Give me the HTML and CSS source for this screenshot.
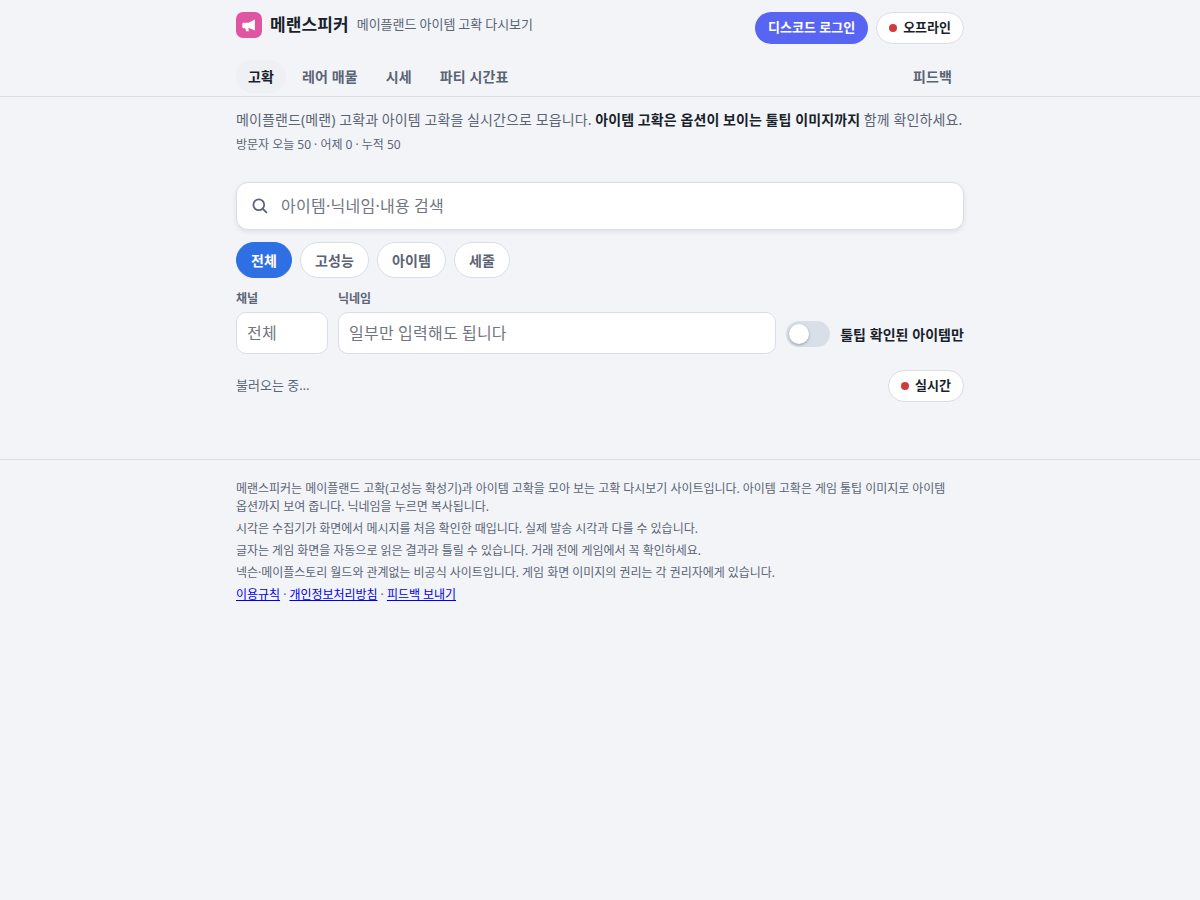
FILE: index.html
```html
<!DOCTYPE html>
<html lang="ko">
<head>
<meta charset="utf-8">
<title>메랜스피커</title>
<link rel="stylesheet" href="styles.css">
</head>
<body>
<header class="header">
  <div class="wrap">
    <div class="topbar">
      <div class="brand">
        <svg class="logo" viewBox="0 0 26 26" aria-hidden="true">
          <rect width="26" height="26" rx="7" fill="#e0559f"/>
          <path d="M18.9 7.4v11.2l-5.4-2.4h-1.3l.7 3.1h-2.7l-1-3.1H7.4a1.1 1.1 0 0 1-1.1-1.1v-3.3a1.1 1.1 0 0 1 1.1-1.1h5.1z" fill="#fff"/>
        </svg>
        <span class="name">메랜스피커</span>
        <span class="tagline">메이플랜드 아이템 고확 다시보기</span>
      </div>
      <div class="actions">
        <button class="login">디스코드 로그인</button>
        <span class="status"><i class="dot"></i>오프라인</span>
      </div>
    </div>
    <nav class="nav">
      <a class="tab active">고확</a>
      <a class="tab">레어 매물</a>
      <a class="tab">시세</a>
      <a class="tab">파티 시간표</a>
      <a class="tab feedback">피드백</a>
    </nav>
  </div>
</header>
<main class="wrap">
  <p class="lead">메이플랜드(메랜) 고확과 아이템 고확을 실시간으로 모읍니다. <strong>아이템 고확은 옵션이 보이는 툴팁 이미지까지</strong> 함께 확인하세요.</p>
  <p class="visits">방문자 오늘 50 · 어제 0 · 누적 50</p>
  <div class="search">
    <svg class="search-icon" viewBox="0 0 18 18" fill="none" stroke="#5b6475" stroke-width="1.8" stroke-linecap="round" aria-hidden="true">
      <circle cx="7.8" cy="7.8" r="5.4"/><path d="M12 12l3.4 3.4"/>
    </svg>
    <input class="search-input" placeholder="아이템·닉네임·내용 검색">
  </div>
  <div class="chips">
    <button class="chip selected">전체</button>
    <button class="chip">고성능</button>
    <button class="chip">아이템</button>
    <button class="chip">세줄</button>
  </div>
  <div class="filters">
    <label class="field channel">채널<input class="input" placeholder="전체"></label>
    <label class="field nickname">닉네임<input class="input" placeholder="일부만 입력해도 됩니다"></label>
    <div class="toggle"><span class="track"><span class="knob"></span></span>툴팁 확인된 아이템만</div>
  </div>
  <div class="feed-head">
    <span>불러오는 중…</span>
    <span class="status"><i class="dot"></i>실시간</span>
  </div>
</main>
<footer class="footer">
  <div class="wrap">
    <p>메랜스피커는 메이플랜드 고확(고성능 확성기)과 아이템 고확을 모아 보는 고확 다시보기 사이트입니다. 아이템 고확은 게임 툴팁 이미지로 아이템 옵션까지 보여 줍니다. 닉네임을 누르면 복사됩니다.</p>
    <p>시각은 수집기가 화면에서 메시지를 처음 확인한 때입니다. 실제 발송 시각과 다를 수 있습니다.</p>
    <p>글자는 게임 화면을 자동으로 읽은 결과라 틀릴 수 있습니다. 거래 전에 게임에서 꼭 확인하세요.</p>
    <p>넥슨·메이플스토리 월드와 관계없는 비공식 사이트입니다. 게임 화면 이미지의 권리는 각 권리자에게 있습니다.</p>
    <p><a href="#">이용규칙</a> · <a href="#">개인정보처리방침</a> · <a href="#">피드백 보내기</a></p>
  </div>
</footer>
</body>
</html>
```
FILE: styles.css
```css
* { box-sizing: border-box; }
body {
  margin: 0;
  background: #f2f4f8;
  color: #1a1f2c;
  font: 14px/1.5 "Noto Sans", "Noto Sans CJK KR", sans-serif;
  word-break: keep-all;
}
p { margin: 0; }
button, input { font-family: inherit; }
.wrap { width: 728px; margin: 0 auto; }

.header { height: 97px; border-bottom: 1px solid #d9dde5; }
.topbar { display: flex; justify-content: space-between; height: 60px; padding-top: 12px; }
.brand { display: flex; align-items: center; gap: 8px; height: 26px; }
.logo { width: 26px; height: 26px; }
.name { font-size: 17px; font-weight: 700; letter-spacing: .1px; }
.tagline { font-size: 13px; color: #5b6475; word-spacing: -.42px; }
.actions { display: flex; gap: 8px; }
.login {
  height: 32px; padding: 0 13px 3px; border: 0; border-radius: 16px;
  background: #5865f2; color: #fff; font-size: 13px; font-weight: 700;
}
.status {
  display: flex; align-items: center; gap: 6px; height: 32px; padding: 0 12px;
  border: 1px solid #d9dde5; border-radius: 16px; background: #fff;
  color: #1a1f2c; font-size: 13px; font-weight: 700;
}
.dot { width: 8px; height: 8px; border-radius: 50%; background: #d03b3b; }
.nav { display: flex; gap: 4px; }
.tab { height: 33px; padding: 0 12px; border-radius: 17px; line-height: 33px; color: #5b6475; font-weight: 700; letter-spacing: .11px; }
.tab.active { background: #eef0f3; color: #1a1f2c; }
.feedback { margin-left: auto; }

.lead { padding-top: 12px; line-height: 22px; color: #5b6475; white-space: nowrap; letter-spacing: .12px; word-spacing: -.15px; }
.lead strong { color: #1a1f2c; }
.visits { margin-top: 5px; font-size: 12px; line-height: 18px; color: #5b6475; letter-spacing: -.02px; }

.search {
  display: flex; align-items: center; gap: 12px; height: 48px; margin-top: 28px; padding: 0 14px;
  border: 1px solid #d9dde5; border-radius: 12px; background: #fff; box-shadow: 0 2px 5px rgba(20, 30, 50, .09);
}
.search-icon { width: 18px; height: 18px; }
.search-input { flex: 1; padding: 0; border: 0; background: none; font-size: 16px; letter-spacing: .26px; word-spacing: -.4px; }
input::placeholder { color: #717680; }

.chips { display: flex; gap: 8px; margin-top: 12px; }
.chip {
  height: 36px; padding: 0 14px; border: 1px solid #d9dde5; border-radius: 18px;
  background: #fff; color: #5b6475; font-size: 14px; font-weight: 700; letter-spacing: .12px;
}
.chip.selected { border-color: #2f6fe4; background: #2f6fe4; color: #fff; }

.filters { display: flex; align-items: flex-end; gap: 10px; margin-top: 12px; }
.field { display: flex; flex-direction: column; gap: 4px; font-size: 12px; line-height: 18px; font-weight: 700; color: #5b6475; }
.channel { width: 92px; }
.nickname { flex: 1; }
.input { width: 100%; height: 42px; padding: 0 10px; border: 1px solid #d9dde5; border-radius: 10px; background: #fff; font-size: 16px; letter-spacing: .26px; word-spacing: -.4px; }
.toggle { display: flex; align-items: center; gap: 10px; height: 40px; font-weight: 700; letter-spacing: .06px; }
.track { width: 44px; height: 26px; padding: 3px; border-radius: 13px; background: #d9dfe8; }
.knob { display: block; width: 20px; height: 20px; border-radius: 50%; background: #fff; box-shadow: 0 1px 3px rgba(0, 0, 0, .3); }
.feed-head { display: flex; justify-content: space-between; align-items: center; margin-top: 16px; font-size: 13px; color: #5b6475; }

.footer { margin-top: 57px; padding-top: 20px; border-top: 1px solid #d9dde5; font-size: 12px; line-height: 18px; color: #5b6475; letter-spacing: -.03px; }
.footer p { margin-bottom: 4px; }
.footer a { color: #0000ee; }
```
